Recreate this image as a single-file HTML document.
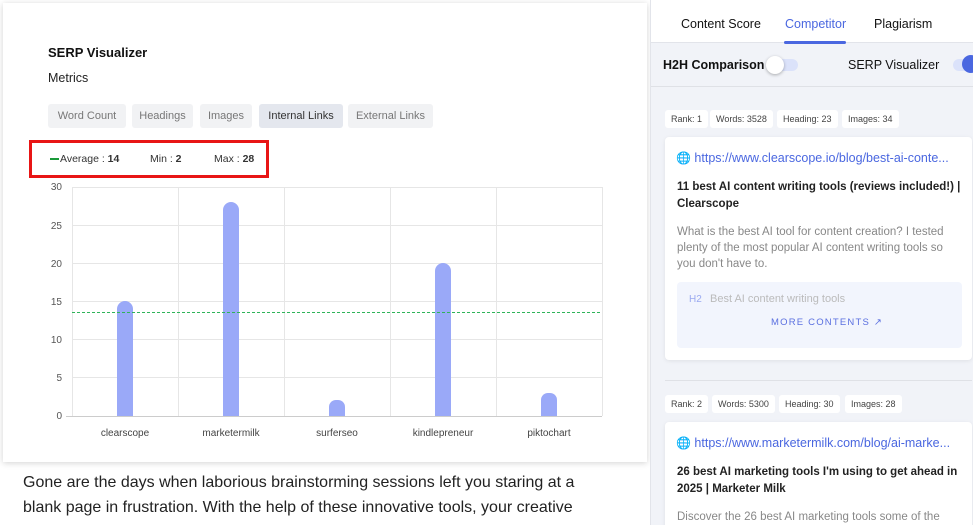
<!DOCTYPE html>
<html><head><meta charset="utf-8"><style>
*{box-sizing:border-box;margin:0;padding:0}
html,body{width:973px;height:525px;overflow:hidden}
body{background:#fff;font-family:"Liberation Sans",sans-serif;position:relative}
.card{position:absolute;left:3px;top:3px;width:644px;height:459px;background:#fff;box-shadow:0 1px 6px rgba(0,0,0,.18)}
.abs{position:absolute}
.tab{position:absolute;top:104px;height:24px;background:#f1f2f4;border-radius:3px;font-size:11px;color:#777;line-height:24px;text-align:center;white-space:nowrap}
.right{position:absolute;left:650px;top:0;width:323px;height:525px;background:#f1f3f8;border-left:1px solid #e2e4ea;overflow:hidden}
.badge{position:absolute;height:18px;background:#fff;border-radius:3px;font-size:9px;color:#444;line-height:18px;padding:0 6px;white-space:nowrap}
.res{position:absolute;left:14px;width:307px;background:#fff;border-radius:4px;box-shadow:0 1px 4px rgba(0,0,0,.08)}
.url{position:absolute;left:11px;top:14px;font-size:12.5px;color:#4a67e0;white-space:nowrap}
.ttl{position:absolute;left:12px;font-size:11.5px;color:#222;font-weight:bold;line-height:17px;width:285px}
.desc{position:absolute;left:12px;font-size:11.5px;color:#888;line-height:16px;width:278px}
</style></head><body>
<div class="card">
<div class="abs" style="left:45px;top:42px;font-size:13px;font-weight:bold;color:#111">SERP Visualizer</div>
<div class="abs" style="left:45px;top:68px;font-size:12.5px;color:#222">Metrics</div>
</div>
<div class="tab" style="left:48px;width:78px">Word Count</div>
<div class="tab" style="left:132px;width:61px">Headings</div>
<div class="tab" style="left:200px;width:52px">Images</div>
<div class="tab" style="left:259px;width:84px;background:#e4e7ee;color:#333">Internal Links</div>
<div class="tab" style="left:348px;width:85px">External Links</div>
<div class="abs" style="left:29px;top:140px;width:240px;height:38px;border:3px solid #e81515"></div>
<div class="abs" style="left:50px;top:158px;width:9px;height:2px;background:#1a9a3a"></div>
<div class="abs" style="left:60px;top:153px;font-size:10.5px;color:#333">Average : <b>14</b></div>
<div class="abs" style="left:150px;top:153px;font-size:10.5px;color:#333">Min : <b>2</b></div>
<div class="abs" style="left:214px;top:153px;font-size:10.5px;color:#333">Max : <b>28</b></div>
<svg class="abs" style="left:0;top:0" width="647" height="460">
<g stroke="#e6e6e6" stroke-width="1">
<line x1="72" y1="187.5" x2="602" y2="187.5"/><line x1="72" y1="225.5" x2="602" y2="225.5"/><line x1="72" y1="263.5" x2="602" y2="263.5"/><line x1="72" y1="301.5" x2="602" y2="301.5"/><line x1="72" y1="339.5" x2="602" y2="339.5"/><line x1="72" y1="377.5" x2="602" y2="377.5"/>
<line x1="72.5" y1="187" x2="72.5" y2="416"/><line x1="178.5" y1="187" x2="178.5" y2="416"/><line x1="284.5" y1="187" x2="284.5" y2="416"/><line x1="390.5" y1="187" x2="390.5" y2="416"/><line x1="496.5" y1="187" x2="496.5" y2="416"/><line x1="602.5" y1="187" x2="602.5" y2="416"/>
</g>
<line x1="66" y1="416.5" x2="602" y2="416.5" stroke="#ccc"/>
<g font-size="10" fill="#555" font-family="Liberation Sans" text-anchor="end">
<text x="62" y="190">30</text><text x="62" y="229">25</text><text x="62" y="267">20</text><text x="62" y="305">15</text><text x="62" y="343">10</text><text x="62" y="381">5</text><text x="62" y="419">0</text></g>
<g fill="#9aa9f8">
<rect x="117" y="301" width="16" height="115" rx="8"/><rect x="117" y="310" width="16" height="106"/>
<rect x="223" y="202" width="16" height="214" rx="8"/><rect x="223" y="212" width="16" height="204"/>
<rect x="329" y="400" width="16" height="16" rx="7"/><rect x="329" y="408" width="16" height="8"/>
<rect x="435" y="263" width="16" height="153" rx="8"/><rect x="435" y="273" width="16" height="143"/>
<rect x="541" y="393" width="16" height="23" rx="7"/><rect x="541" y="401" width="16" height="15"/>
</g>
<line x1="72" y1="312.5" x2="602" y2="312.5" stroke="#2fb45a" stroke-dasharray="3,2"/>
<g font-size="10" fill="#444" font-family="Liberation Sans" text-anchor="middle">
<text x="125" y="436">clearscope</text><text x="231" y="436">marketermilk</text><text x="337" y="436">surferseo</text><text x="443" y="436">kindlepreneur</text><text x="549" y="436">piktochart</text></g>
</svg>
<div class="abs" style="left:23px;top:470px;width:570px;font-size:16px;line-height:25px;color:#222">Gone are the days when laborious brainstorming sessions left you staring at a blank page in frustration. With the help of these innovative tools, your creative potential can be unleashed effortlessly. In this blog post, we'll go into the</div>
<div class="right">
<div class="abs" style="left:0;top:0;width:323px;height:43px;background:#fff;border-bottom:1px solid #e2e4ea"></div>
<div class="abs" style="left:30px;top:17px;font-size:12.5px;color:#111">Content Score</div>
<div class="abs" style="left:134px;top:17px;font-size:12.5px;color:#4a67e0">Competitor</div>
<div class="abs" style="left:133px;top:41px;width:62px;height:3px;background:#4a67e0;border-radius:2px"></div>
<div class="abs" style="left:223px;top:17px;font-size:12.5px;color:#111">Plagiarism</div>
<div class="abs" style="left:12px;top:58px;font-size:12.5px;font-weight:bold;color:#111">H2H Comparison</div>
<div class="abs" style="left:117px;top:59px;width:30px;height:12px;background:#dbe2fa;border-radius:6px"></div>
<div class="abs" style="left:115px;top:56px;width:18px;height:18px;background:#fff;border-radius:50%;box-shadow:0 1px 3px rgba(0,0,0,.3)"></div>
<div class="abs" style="left:197px;top:58px;font-size:12.5px;color:#111">SERP Visualizer</div>
<div class="abs" style="left:302px;top:59px;width:30px;height:12px;background:#dbe2fa;border-radius:6px"></div>
<div class="abs" style="left:311px;top:55px;width:18px;height:18px;background:#4a67e0;border-radius:50%"></div>
<div class="abs" style="left:0;top:86px;width:323px;height:1px;background:#dfe1e6"></div>
<div class="badge" style="left:14px;top:110px">Rank: 1</div>
<div class="badge" style="left:59px;top:110px">Words: 3528</div>
<div class="badge" style="left:126px;top:110px">Heading: 23</div>
<div class="badge" style="left:191px;top:110px">Images: 34</div>
<div class="res" style="top:137px;height:223px">
<div class="url"><span style="font-size:12px">🌐</span> https://www.clearscope.io/blog/best-ai-conte...</div>
<div class="ttl" style="top:42px">11 best AI content writing tools (reviews included!) | Clearscope</div>
<div class="desc" style="top:87px">What is the best AI tool for content creation? I tested plenty of the most popular AI content writing tools so you don't have to.</div>
<div class="abs" style="left:12px;top:145px;width:285px;height:66px;background:#f2f5fd;border-radius:4px">
<div class="abs" style="left:12px;top:12px;font-size:10px;color:#9aa9f0">H2</div>
<div class="abs" style="left:33px;top:11px;font-size:11px;color:#bbb">Best AI content writing tools</div>
<div class="abs" style="left:94px;top:35px;font-size:9.5px;letter-spacing:1.2px;color:#5a6fe0">MORE CONTENTS ↗</div>
</div></div>
<div class="abs" style="left:14px;top:380px;width:307px;height:1px;background:#dfe1e6"></div>
<div class="badge" style="left:14px;top:395px">Rank: 2</div>
<div class="badge" style="left:61px;top:395px">Words: 5300</div>
<div class="badge" style="left:128px;top:395px">Heading: 30</div>
<div class="badge" style="left:194px;top:395px">Images: 28</div>
<div class="res" style="top:422px;height:120px">
<div class="url"><span style="font-size:12px">🌐</span> https://www.marketermilk.com/blog/ai-marke...</div>
<div class="ttl" style="top:42px">26 best AI marketing tools I'm using to get ahead in 2025 | Marketer Milk</div>
<div class="desc" style="top:87px">Discover the 26 best AI marketing tools some of the</div>
</div>
</div>
</body></html>
